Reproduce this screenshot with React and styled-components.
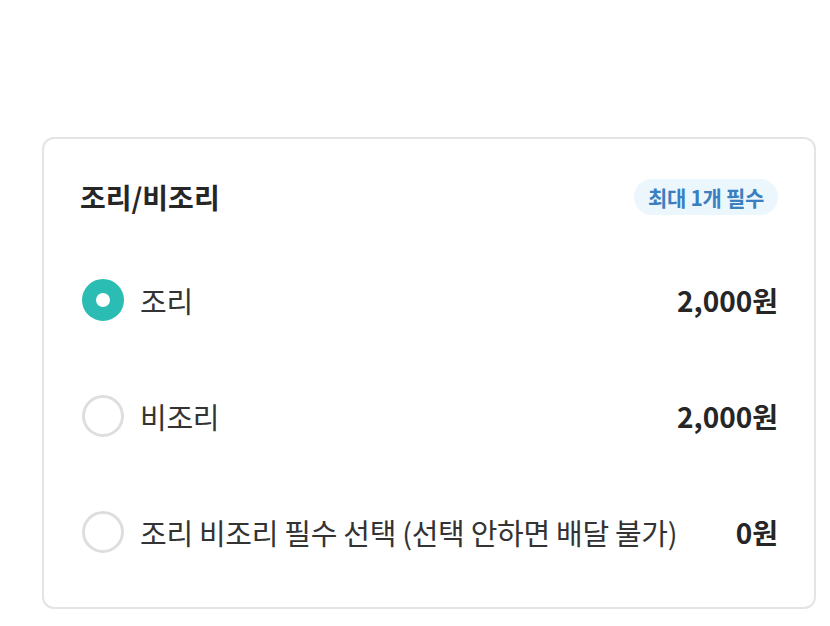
import React, { useState } from "react";
import styled, { createGlobalStyle } from "styled-components";

const GlobalStyle = createGlobalStyle`
  html, body {
    margin: 0;
    padding: 0;
    background: #ffffff;
  }
  body {
    font-family: "Noto Sans CJK KR", "Noto Sans", sans-serif;
    color: #2b2b2b;
  }
`;

const options = [
  { id: "cook", label: "조리", price: "2,000원" },
  { id: "raw", label: "비조리", price: "2,000원" },
  { id: "none", label: "조리 비조리 필수 선택 (선택 안하면 배달 불가)", price: "0원" },
];

const App = () => {
  const [selected, setSelected] = useState("cook");

  return (
    <>
      <GlobalStyle />
      <Page>
        <Card>
          <Header>
            <Title>조리/비조리</Title>
            <Badge>최대 1개 필수</Badge>
          </Header>
          {options.map((o) => (
            <Row key={o.id} onClick={() => setSelected(o.id)}>
              <Radio $checked={selected === o.id} />
              <Label>{o.label}</Label>
              <Price>{o.price}</Price>
            </Row>
          ))}
        </Card>
      </Page>
    </>
  );
};

export default App;

const Page = styled.div`
  width: 830px;
  height: 626px;
  padding: 137px 0 0 42px;
  box-sizing: border-box;
`;

const Card = styled.section`
  width: 774px;
  height: 472px;
  box-sizing: border-box;
  border: 2px solid #e4e4e4;
  border-radius: 12px;
  padding: 38px 36px 0 36px;
  display: flex;
  flex-direction: column;
`;

const Header = styled.div`
  display: flex;
  align-items: center;
  justify-content: space-between;
  height: 40px;
  margin-bottom: 25px;
`;

const Title = styled.h3`
  margin: 0;
  font-size: 28px;
  font-weight: 700;
  color: #262626;
`;

const Badge = styled.span`
  display: inline-flex;
  align-items: center;
  height: 36px;
  padding: 0 14px;
  border-radius: 18px;
  background: #ecf6fd;
  color: #3a80c0;
  font-size: 21px;
  font-weight: 700;
  letter-spacing: -0.3px;
`;

const Row = styled.div`
  display: flex;
  align-items: center;
  height: 116px;
  cursor: pointer;
`;

const Radio = styled.span`
  flex: none;
  width: 42px;
  height: 42px;
  border-radius: 50%;
  box-sizing: border-box;
  border: ${(p) => (p.$checked ? "14px solid #2bbdb3" : "3px solid #dedede")};
  background: #fff;
  margin-left: 2px;
  margin-right: 16px;
`;

const Label = styled.span`
  flex: 1;
  font-size: 29px;
  letter-spacing: -0.3px;
  color: #333;
`;

const Price = styled.span`
  font-size: 28px;
  font-weight: 700;
  color: #262626;
`;
